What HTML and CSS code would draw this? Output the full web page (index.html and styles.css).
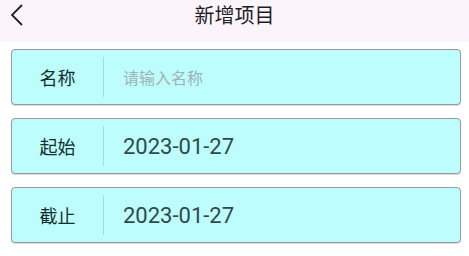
FILE: index.html
```html
<!DOCTYPE html>
<html lang="zh-CN">
<head>
  <meta charset="UTF-8">
  <title>新增项目</title>
  <link rel="stylesheet" href="styles.css">
</head>
<body>
  <div class="header">
    <span class="back">
      <svg width="16" height="24" viewBox="0 0 16 24"><path d="M13 2 L3 12 L13 22" fill="none" stroke="#222" stroke-width="1.8"/></svg>
    </span>
    <h1 class="title">新增项目</h1>
  </div>

  <div class="form">
    <div class="row">
      <div class="label">名称</div>
      <div class="value placeholder">请输入名称</div>
    </div>
    <div class="row">
      <div class="label">起始</div>
      <div class="value">2023-01-27</div>
    </div>
    <div class="row">
      <div class="label">截止</div>
      <div class="value">2023-01-27</div>
    </div>
  </div>
</body>
</html>
```

FILE: styles.css
```css
* {
  margin: 0;
  padding: 0;
  box-sizing: border-box;
}

body {
  width: 469px;
  height: 256px;
  background-color: #fff;
  font-family: "Noto Sans CJK SC", "Noto Sans", sans-serif;
  color: #333;
}

.header {
  position: relative;
  height: 42px;
  background-color: #fcf4fb;
  display: flex;
  align-items: center;
  justify-content: center;
}

.back {
  position: absolute;
  left: 9px;
  top: 3px;
}

.title {
  font-size: 20px;
  font-weight: normal;
  line-height: 30px;
  color: #1e1e1e;
  margin-top: -12px;
}

.form {
  padding: 7px 8px 0 11px;
  display: flex;
  flex-direction: column;
  gap: 13px;
}

.row {
  height: 56px;
  display: flex;
  align-items: center;
  background-color: #bdfdfd;
  border: 1.5px solid #999;
  border-radius: 4px;
  box-shadow: 0 1px 1px rgba(0, 0, 0, 0.15);
}

.label {
  width: 92px;
  height: 40px;
  line-height: 40px;
  text-align: center;
  font-size: 18px;
  color: #142e2e;
  border-right: 1px solid #a8dcdc;
}

.value {
  padding-left: 19px;
  font-family: "Roboto", "Noto Sans CJK SC", sans-serif;
  font-size: 22px;
  color: #2f4a4a;
}

.value.placeholder {
  font-family: "Noto Sans CJK SC", sans-serif;
  font-size: 16px;
  color: #9fb3b3;
}
```
